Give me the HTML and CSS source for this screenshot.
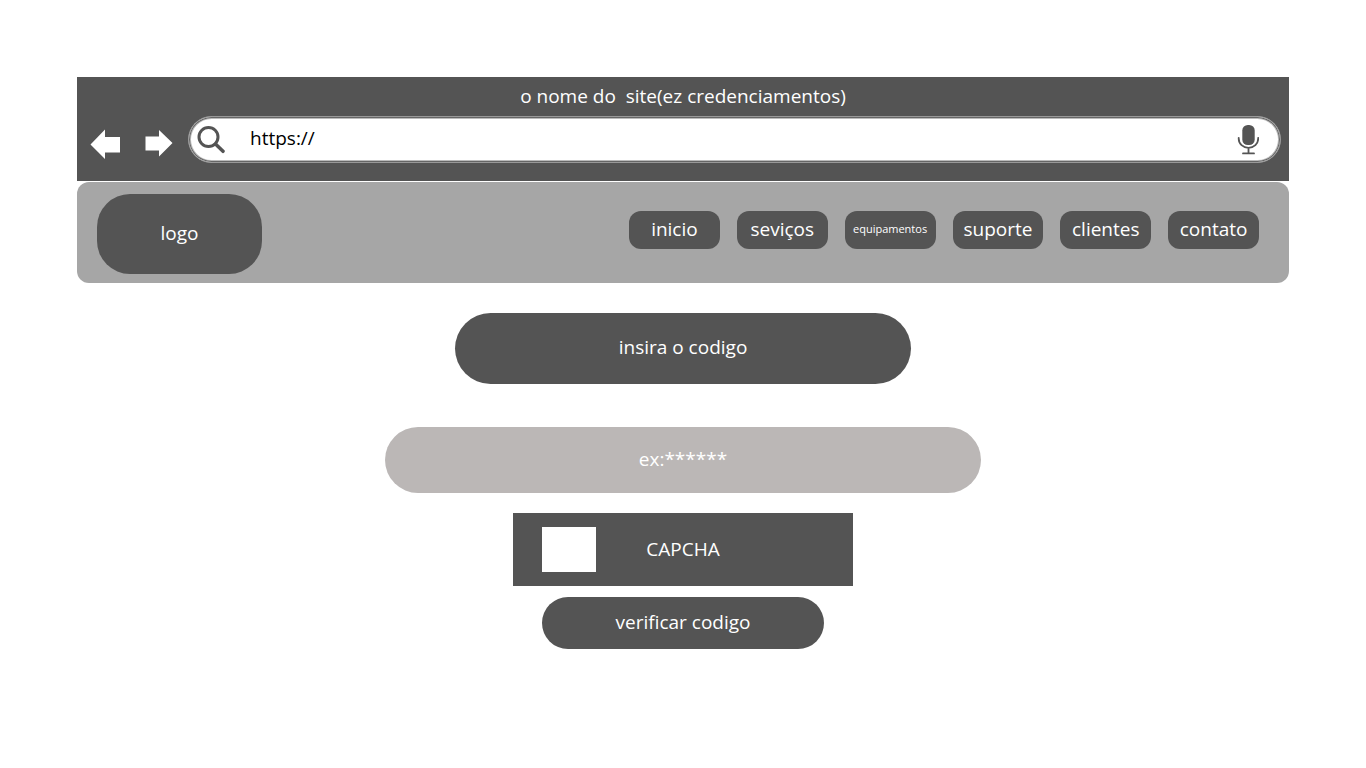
FILE: index.html
```html
<!DOCTYPE html>
<html lang="pt-BR">
<head>
<meta charset="utf-8">
<meta name="viewport" content="width=device-width, initial-scale=1">
<title>ez credenciamentos</title>
<link rel="stylesheet" href="styles.css">
</head>
<body>
<div class="page">
  <header class="browser">
    <p class="browser-title">o nome do  site(ez credenciamentos)</p>
    <div class="browser-row">
      <button class="arrow arrow-back" type="button" aria-label="Voltar">
        <svg width="30" height="30" viewBox="0 0 30 30"><path d="M.5 15.500 15 .5V8H30V23.500H15V30Z" fill="#fff"/></svg>
      </button>
      <button class="arrow arrow-next" type="button" aria-label="Avançar">
        <svg width="28" height="28" viewBox="0 0 28 28"><path d="M27.500 13 14 0V6.500H.5V20.500H14V26.500Z" fill="#fff"/></svg>
      </button>
      <div class="address">
        <svg class="search-icon" width="28" height="28" viewBox="0 0 28 28" fill="none" stroke="#545454"><circle cx="11.500" cy="11" r="9.500" stroke-width="3"/><path d="M18.500 18 26 25.300" stroke-width="3.500" stroke-linecap="round"/></svg>
        <input class="address-input" type="text" value="https://" aria-label="Endereço">
        <button class="mic" type="button" aria-label="Pesquisa por voz">
          <svg width="22" height="30" viewBox="0 0 22 30"><rect x="5.300" y="0" width="12.400" height="20" rx="5.500" fill="#545454"/><path d="M1.700 12.800V13.500C1.700 19 6 22.800 11.500 22.800S21.200 19 21.200 13.500V12.800M11.500 23V28M6 28.400H17" fill="none" stroke="#545454" stroke-width="1.800" stroke-linecap="round"/></svg>
        </button>
      </div>
    </div>
  </header>
  <div class="site-bar">
    <a class="logo" href="#">logo</a>
    <nav class="menu">
      <a class="menu-link" href="#">inicio</a>
      <a class="menu-link" href="#">seviços</a>
      <a class="menu-link menu-link-small" href="#">equipamentos</a>
      <a class="menu-link" href="#">suporte</a>
      <a class="menu-link" href="#">clientes</a>
      <a class="menu-link" href="#">contato</a>
    </nav>
  </div>
  <main>
    <form class="form">
      <label class="form-title" for="code">insira o codigo</label>
      <input class="code" id="code" type="text" placeholder="ex:******">
      <div class="captcha">
        <input class="captcha-box" id="captcha" type="checkbox">
        <label class="captcha-label" for="captcha">CAPCHA</label>
      </div>
      <button class="submit" type="button">verificar codigo</button>
    </form>
  </main>
</div>
</body>
</html>
```
FILE: styles.css
```css
* {
  box-sizing: border-box;
}

body {
  margin: 0;
  background: #fff;
  color: #fff;
  font-family: "Open Sans", "Noto Sans", sans-serif;
  font-size: 19px;
  line-height: 26px;
}

button,
input {
  margin: 0;
  padding: 0;
  border: 0;
  background: none;
  color: inherit;
  font: inherit;
}

a {
  color: inherit;
  text-decoration: none;
}

svg {
  display: block;
}

.page {
  padding: 77px;
}

.browser {
  padding: 6px 8px 18px 13px;
  background: #545454;
}

.browser-title {
  margin: 0 0 7px;
  padding-right: 5px;
  text-align: center;
  white-space: pre-wrap;
}

.browser-row {
  display: flex;
  align-items: center;
}

.arrow {
  flex: none;
  padding-top: 8px;
}

.arrow-next {
  margin: 0 15px 0 25px;
}

.address {
  display: flex;
  flex: 1;
  align-items: center;
  min-width: 0;
  height: 47px;
  padding: 0 21px 0 6px;
  border: 1px solid #999;
  border-radius: 24px;
  background: #fff;
  box-shadow: inset 0 0 0 1px #666, inset 0 0 0 2px #bbb;
}

.search-icon {
  flex: none;
  margin-left: 2px;
}

.address-input {
  flex: 1;
  min-width: 0;
  margin-left: 25px;
  padding-bottom: 4px;
  color: #000;
}

.site-bar {
  display: flex;
  align-items: flex-start;
  justify-content: space-between;
  gap: 20px;
  margin-top: 1px;
  padding: 12px 30px 9px 20px;
  border-radius: 12px;
  background: #a6a6a6;
}

.logo {
  width: 165px;
  padding: 26px 0 28px;
  border-radius: 33px;
  background: #545454;
  text-align: center;
}

.menu {
  display: grid;
  grid-template-columns: repeat(6, 1fr);
  gap: 17px;
  flex: 0 1 630px;
  margin-top: 17px;
}

.menu-link {
  padding: 5px 0 7px;
  border-radius: 12px;
  background: #545454;
  text-align: center;
}

.menu-link-small {
  font-size: 11px;
}

.form {
  display: flex;
  flex-direction: column;
  align-items: center;
  padding-top: 30px;
}

.form-title {
  width: 456px;
  max-width: 100%;
  padding: 21px 0 24px;
  border-radius: 36px;
  background: #545454;
  text-align: center;
}

.code {
  width: 596px;
  max-width: 100%;
  height: 66px;
  margin: 43px 0 20px;
  padding-bottom: 2px;
  border-radius: 33px;
  background: #bbb7b6;
  text-align: center;
}

.code::placeholder {
  color: #fff;
  opacity: 1;
}

.captcha {
  display: grid;
  grid-template-columns: 1fr auto 1fr;
  align-items: center;
  width: 340px;
  max-width: 100%;
  height: 73px;
  padding: 0 29px;
  background: #545454;
}

.captcha-box {
  width: 54px;
  height: 45px;
  appearance: none;
  background: #fff;
}

.captcha-box:checked {
  box-shadow: inset 0 0 0 12px #fff, inset 0 0 0 30px #545454;
}

.captcha-label {
  padding-bottom: 2px;
}

.submit {
  width: 282px;
  max-width: 100%;
  margin-top: 11px;
  padding: 12px 0 14px;
  border-radius: 26px;
  background: #545454;
}
```
